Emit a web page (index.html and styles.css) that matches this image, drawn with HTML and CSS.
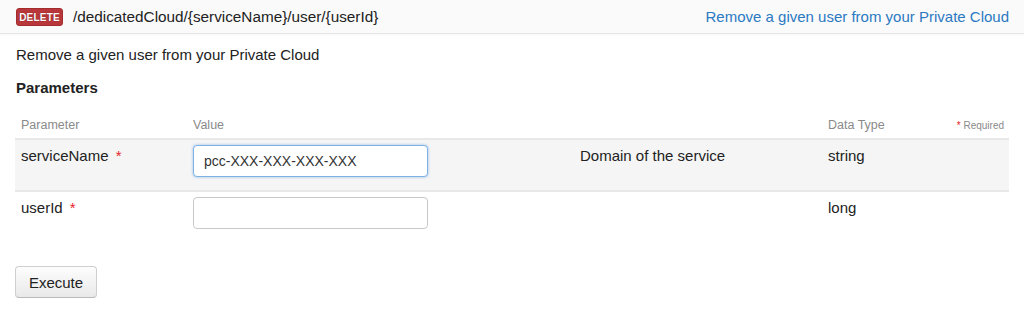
FILE: index.html
```html
<!DOCTYPE html>
<html lang="en">
<head>
    <meta charset="UTF-8">
    <title>DELETE /dedicatedCloud/{serviceName}/user/{userId}</title>
    <link rel="stylesheet" href="styles.css">
</head>
<body>
    <div class="op-heading">
        <div class="op-path">
            <span class="verb-badge">DELETE</span>
            <span class="path-text">/dedicatedCloud/{serviceName}/user/{userId}</span>
        </div>
        <a class="op-summary" href="#">Remove a given user from your Private Cloud</a>
    </div>

    <div class="op-content">
        <p class="op-description">Remove a given user from your Private Cloud</p>
        <h4 class="params-title">Parameters</h4>

        <table class="params-table">
            <thead>
                <tr>
                    <th class="col-name">Parameter</th>
                    <th class="col-value">Value</th>
                    <th class="col-desc"></th>
                    <th class="col-type">Data Type</th>
                    <th class="col-req"><span class="req-star">*</span> Required</th>
                </tr>
            </thead>
            <tbody>
                <tr class="row-odd">
                    <td class="cell-text">serviceName <span class="req-star big">*</span></td>
                    <td class="cell-input"><input type="text" class="param-input focused" value="pcc-XXX-XXX-XXX-XXX"></td>
                    <td class="cell-text">Domain of the service</td>
                    <td class="cell-text">string</td>
                    <td></td>
                </tr>
                <tr>
                    <td class="cell-text">userId <span class="req-star big">*</span></td>
                    <td class="cell-input"><input type="text" class="param-input"></td>
                    <td></td>
                    <td class="cell-text">long</td>
                    <td></td>
                </tr>
            </tbody>
        </table>

        <button class="execute-btn">Execute</button>
    </div>
</body>
</html>
```

FILE: styles.css
```css
body, html {
    margin: 0;
    padding: 0;
}

body {
    font-family: "Liberation Sans", Arial, sans-serif;
    font-size: 15px;
    color: #222;
    background-color: #fff;
}

.op-heading {
    display: flex;
    justify-content: space-between;
    align-items: center;
    height: 33px;
    padding: 0 15px 0 16px;
    background-color: #fafafa;
    border-bottom: 1px solid #e6e6e6;
    box-shadow: 0 1px 2px rgba(0, 0, 0, 0.04);
}

.op-path {
    display: flex;
    align-items: center;
}

.verb-badge {
    display: inline-block;
    width: 47px;
    height: 18px;
    line-height: 18px;
    box-sizing: border-box;
    text-align: center;
    background-color: #b8373a;
    border: 1px solid #a32c2f;
    border-radius: 3px;
    color: #fff;
    font-size: 10px;
    font-weight: bold;
    letter-spacing: 0.2px;
    text-shadow: 0 0 1px #6d1316;
    margin-right: 10px;
}

.path-text {
    font-size: 15.3px;
    color: #222;
}

.op-summary {
    font-size: 15px;
    color: #2b79c2;
    text-decoration: none;
}

.op-content {
    padding: 0 15px;
}

.op-description {
    margin: 12px 0 0 1px;
    line-height: 18px;
}

.params-title {
    margin: 15px 0 0 1px;
    font-size: 15px;
    line-height: 18px;
    font-weight: bold;
}

.params-table {
    width: 994px;
    margin-top: 18px;
    border-collapse: collapse;
}

.params-table th {
    text-align: left;
    font-weight: normal;
    font-size: 12.5px;
    color: #8a8a8a;
    padding: 3px 6px 6px;
    height: 12px;
    border-bottom: 2px solid #e8e8e8;
}

.params-table th.col-req {
    text-align: right;
    font-size: 10px;
    padding-right: 5px;
}

.col-name { width: 160px; }
.col-value { width: 375px; }
.col-desc { width: 236px; }
.col-type { width: 106px; }

.params-table td {
    vertical-align: top;
    padding: 5px 6px 0;
    height: 45px;
    line-height: 18px;
}

.params-table td.cell-text {
    padding-top: 7px;
    height: 43px;
}

.params-table tr.row-odd td {
    background-color: #f5f5f5;
    border-bottom: 2px solid #e8e8e8;
}

.req-star {
    color: #e8232a;
}

.req-star.big {
    margin-left: 3px;
}

.param-input {
    display: block;
    width: 235px;
    height: 32px;
    box-sizing: border-box;
    margin: 0;
    padding: 4px 10px;
    font-family: "Liberation Sans", Arial, sans-serif;
    font-size: 14px;
    color: #333;
    background-color: #fff;
    border: 1px solid #c8c8c8;
    border-radius: 4px;
    outline: none;
}

.param-input.focused {
    border-color: #7fb2e4;
    box-shadow: 0 0 3px rgba(82, 148, 220, 0.6);
}

.execute-btn {
    display: block;
    margin-top: 24px;
    width: 82px;
    height: 32px;
    font-family: "Liberation Sans", Arial, sans-serif;
    font-size: 15px;
    color: #222;
    background: linear-gradient(#fdfdfd, #e9e9e9);
    border: 1px solid #cfcfcf;
    border-bottom-color: #b9b9b9;
    border-radius: 4px;
    cursor: pointer;
}
```
